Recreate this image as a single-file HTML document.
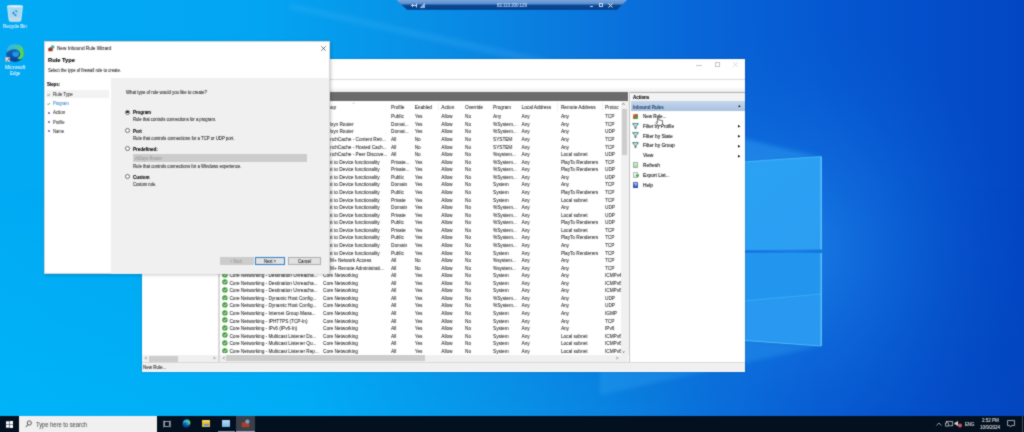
<!DOCTYPE html>
<html><head><meta charset="utf-8">
<style>
*{box-sizing:border-box;margin:0;padding:0}
html,body{width:1024px;height:432px;overflow:hidden;background:#0a70dc;font-family:"Liberation Sans",sans-serif;position:relative}
.a{position:absolute}
.t{position:absolute;white-space:nowrap;color:#222;transform-origin:0 50%;text-shadow:0.3px 0 0 color-mix(in srgb,currentColor 30%,transparent)}
.chk{position:absolute;width:5.6px;height:5.6px;border-radius:50%;background:radial-gradient(circle at 40% 35%,#7cc86a,#2e8a2e 70%);}
#wrap{position:absolute;left:0;top:0;width:1024px;height:432px;filter:url(#gb)}
</style></head><body><svg width="0" height="0" style="position:absolute"><filter id="gb" x="0" y="0" width="100%" height="100%" color-interpolation-filters="sRGB"><feConvolveMatrix order="3" kernelMatrix="1 2 1 2 12 2 1 2 1" divisor="24" edgeMode="duplicate"/></filter></svg><div id="wrap">
<svg class="a" style="left:0;top:0" width="1024" height="432" viewBox="0 0 1024 432">
<defs>
<linearGradient id="bgt" x1="0" y1="0" x2="1024" y2="0" gradientUnits="userSpaceOnUse">
<stop offset="0" stop-color="#02aaf4"/><stop offset="0.25" stop-color="#03a5f2"/><stop offset="0.4" stop-color="#0892e7"/>
<stop offset="0.55" stop-color="#0a7ade"/><stop offset="0.68" stop-color="#0866d8"/><stop offset="0.82" stop-color="#0556d0"/><stop offset="1" stop-color="#0346c4"/></linearGradient>
<linearGradient id="bgb" x1="0" y1="0" x2="1024" y2="0" gradientUnits="userSpaceOnUse">
<stop offset="0" stop-color="#00b4f8"/><stop offset="0.3" stop-color="#01acf5"/><stop offset="0.48" stop-color="#0894e8"/>
<stop offset="0.64" stop-color="#0a7cdd"/><stop offset="0.72" stop-color="#086ad8"/><stop offset="0.8" stop-color="#0658d0"/><stop offset="0.9" stop-color="#044ec8"/><stop offset="1" stop-color="#0346bf"/></linearGradient>
<linearGradient id="vmix" x1="0" y1="0" x2="0" y2="416" gradientUnits="userSpaceOnUse">
<stop offset="0" stop-color="#fff" stop-opacity="0"/><stop offset="0.45" stop-color="#fff" stop-opacity="0"/><stop offset="1" stop-color="#fff" stop-opacity="1"/></linearGradient>
<mask id="m1"><rect width="1024" height="432" fill="url(#vmix)"/></mask>
<radialGradient id="glow" cx="790" cy="250" r="230" gradientUnits="userSpaceOnUse">
<stop offset="0" stop-color="#2a96f2" stop-opacity="0.6"/><stop offset="0.5" stop-color="#1a7ee6" stop-opacity="0.3"/><stop offset="1" stop-color="#0a60d0" stop-opacity="0"/></radialGradient>
<linearGradient id="p1" x1="745" y1="157" x2="821" y2="250" gradientUnits="userSpaceOnUse">
<stop offset="0" stop-color="#2aa2f4"/><stop offset="1" stop-color="#2c9ef2"/></linearGradient>
<filter id="bl" x="-20%" y="-20%" width="140%" height="140%"><feGaussianBlur stdDeviation="2"/></filter>
<filter id="bl6" x="-20%" y="-20%" width="140%" height="140%"><feGaussianBlur stdDeviation="6"/></filter>
</defs>
<rect width="1024" height="432" fill="url(#bgt)"/>
<rect width="1024" height="432" fill="url(#bgb)" mask="url(#m1)"/>
<rect width="1024" height="432" fill="url(#glow)"/>
<polygon points="600,105 821,157 600,176" fill="#35a8f5" opacity="0.4" filter="url(#bl)"/>
<polygon points="600,330 821,346 600,395" fill="#35a8f5" opacity="0.3" filter="url(#bl)"/>
<polygon points="290,3 580,66 580,74 290,9" fill="#60c4ff" opacity="0.16" filter="url(#bl)"/>
<polygon points="600,172 821,156.5 821,249.5 600,251" fill="url(#p1)"/>
<polygon points="600,253 821,253 821,346 600,330" fill="#2296ee"/>
<polygon points="600,314 821,294 821,346 600,330" fill="#2898f0"/>
<line x1="600" y1="314" x2="821" y2="294" stroke="#48b8f8" stroke-width="0.6"/>
<line x1="821.2" y1="156.5" x2="821.2" y2="249.5" stroke="#78d8ff" stroke-width="1.1"/>
<line x1="821.2" y1="253" x2="821.2" y2="346" stroke="#78d8ff" stroke-width="1.1"/>
<line x1="600" y1="172" x2="821" y2="156.5" stroke="#58c4fa" stroke-width="0.7"/>
<line x1="600" y1="330" x2="821" y2="346" stroke="#58c4fa" stroke-width="0.8"/>
</svg>
<svg class="a" style="left:390px;top:0" width="240" height="12" viewBox="0 0 240 12">
<defs><linearGradient id="rdp" x1="0" y1="0" x2="0" y2="1">
<stop offset="0" stop-color="#79a6de"/><stop offset="0.42" stop-color="#5a8ccc"/><stop offset="0.5" stop-color="#0b4b98"/><stop offset="1" stop-color="#083c84"/></linearGradient></defs>
<polygon points="6.5,0 237,0 227,9.8 17,9.8" fill="url(#rdp)"/>
</svg>
<div class="t" style="left:497.00px;top:4px;font-size:4.6px;line-height:4.6px;color:#cfe2ff;transform:scaleX(0.9452);">82.113.200.129</div>
<svg class="a" style="left:411px;top:2.5px" width="6" height="5" viewBox="0 0 6 5"><path d="M0.5,2.5 L5.5,2.5 M2,1 L0.5,2.5 L2,4 M5.5,0.5 L5.5,4.5" stroke="#e8eefa" stroke-width="0.9" fill="none"/></svg>
<div class="a" style="left:420px;top:2.5px;width:5px;height:5px;background:linear-gradient(135deg,transparent 50%,#9bb7de 50%)"></div>
<div class="a" style="left:590px;top:6px;width:3px;height:1px;background:#cdd9ee;"></div>
<div class="a" style="left:599px;top:3px;width:4px;height:4px;border:1px solid #cdd9ee"></div>
<svg class="a" style="left:608px;top:2.5px" width="5" height="5" viewBox="0 0 5 5"><path d="M0.5,0.5 L4.5,4.5 M4.5,0.5 L0.5,4.5" stroke="#eef2fa" stroke-width="1"/></svg>
<svg class="a" style="left:5px;top:3.5px" width="20" height="18" viewBox="0 0 20 18">
<path d="M2.5,2 L17.5,2 L15.8,16.5 Q15.6,17.3 14.8,17.3 L5.2,17.3 Q4.4,17.3 4.2,16.5 Z" fill="#d8e8f4" fill-opacity="0.75" stroke="#f2f8fc" stroke-width="0.7"/>
<ellipse cx="10" cy="2.2" rx="7.6" ry="1.2" fill="#eef6fb" fill-opacity="0.8"/>
<path d="M4.5,13.5 L15.5,13.5 L15.1,16.5 L4.9,16.5Z" fill="#e8d8d8" opacity="0.5"/>
<path d="M7.2,9.8 L8.6,7.2 L10,9.8 Z M9.6,6.6 L11.8,6.6 L12.6,8.8 Z M8.2,10.6 L11.8,10.6 L10.8,12.2 Z" fill="#2a6cc0"/>
</svg>
<div class="t" style="left:3.20px;top:25px;font-size:4.8px;line-height:4.8px;color:#eef7ff;transform:scaleX(0.9352);">Recycle Bin</div>
<svg class="a" style="left:4.6px;top:42.7px" width="20" height="20" viewBox="0 0 22 22">
<defs><linearGradient id="edg" x1="0" y1="0" x2="0.3" y2="1"><stop offset="0" stop-color="#1a78d0"/><stop offset="1" stop-color="#0c3f96"/></linearGradient>
<linearGradient id="edg2" x1="0" y1="0" x2="1" y2="0.4"><stop offset="0" stop-color="#30b4ea"/><stop offset="0.55" stop-color="#38c0c8"/><stop offset="1" stop-color="#5cd84a"/></linearGradient></defs>
<circle cx="11" cy="11" r="9.8" fill="url(#edg)"/>
<path d="M1.2,11.5 Q1.5,1.2 11,1.2 Q20.8,1.4 20.8,11 Q20.8,16 17.5,17.5 Q14.5,18.5 13.5,16.5 Q17.5,15 16.5,11 Q15,6.5 9.5,6.8 Q4,7.5 1.2,11.5Z" fill="url(#edg2)"/>
<ellipse cx="11.8" cy="12.2" rx="3.6" ry="3.3" fill="#1c9ae6"/>
<path d="M1.4,12.5 Q3,8.5 8,8.2 Q12,8.4 12.5,11" stroke="#0e5cb8" stroke-width="1.2" fill="none" opacity="0.6"/>
</svg>
<div class="a" style="left:5.2px;top:57.2px;width:5px;height:5px;background:#f6f6f6;border:0.4px solid #9ab"></div>
<svg class="a" style="left:5.8px;top:57.8px" width="4" height="4" viewBox="0 0 4 4"><path d="M0.8,3.4 Q1,1.4 3,1.2 M2.1,0.5 L3.1,1.2 L2.3,2.1" stroke="#1a2a4a" stroke-width="0.6" fill="none"/></svg>
<div class="t" style="left:4.60px;top:66px;font-size:4.8px;line-height:4.8px;color:#eef7ff;transform:scaleX(1.0478);">Microsoft</div>
<div class="t" style="left:9.70px;top:72px;font-size:4.8px;line-height:4.8px;color:#eef7ff;transform:scaleX(0.9188);">Edge</div>
<div class="a" style="left:142px;top:58.6px;width:602.8px;height:313.2px;background:#ffffff;box-shadow:0 0 2px rgba(0,0,0,.25)"></div>
<div class="a" style="left:696px;top:64.8px;width:6px;height:0.6px;background:#c4c4c4;"></div>
<div class="a" style="left:715px;top:62.3px;width:4.6px;height:4.6px;border:0.6px solid #c4c4c4"></div>
<svg class="a" style="left:732.9px;top:62.3px" width="5" height="5" viewBox="0 0 5 5"><path d="M0.3,0.3 L4.7,4.7 M4.7,0.3 L0.3,4.7" stroke="#c4c4c4" stroke-width="0.6"/></svg>
<div class="a" style="left:142px;top:79px;width:602.8px;height:0.8px;background:#dcdcdc;"></div>
<div class="a" style="left:142px;top:87px;width:602.8px;height:5px;background:linear-gradient(#ffffff,#ececec);"></div>
<div class="a" style="left:218px;top:91.8px;width:2.4px;height:270.5px;background:#d9d9d9;"></div>
<div class="a" style="left:142px;top:355.3px;width:76px;height:6.9px;background:#f0f0f0;"></div>
<div class="a" style="left:149.3px;top:355.8px;width:28.5px;height:6px;background:#cdcdcd;"></div>
<div class="t" style="left:144.50px;top:357px;font-size:4.5px;line-height:4.5px;color:#777;">&lt;</div>
<div class="t" style="left:213.00px;top:357px;font-size:4.5px;line-height:4.5px;color:#777;">&gt;</div>
<div class="a" style="left:220.4px;top:92px;width:407.3px;height:8.7px;background:#6b6b6b;"></div>
<div class="a" style="left:220.4px;top:355.3px;width:408px;height:6.9px;background:#f0f0f0;"></div>
<div class="a" style="left:226px;top:355.2px;width:199px;height:5.6px;background:#cdcdcd;"></div>
<div class="t" style="left:222.50px;top:357px;font-size:4.5px;line-height:4.5px;color:#777;">&lt;</div>
<div class="t" style="left:615.80px;top:357px;font-size:4.5px;line-height:4.5px;color:#777;">&gt;</div>
<div class="t" style="left:229.40px;top:106px;font-size:4.7px;line-height:4.7px;color:#2a2a2a;">Name</div>
<div class="t" style="left:323.00px;top:106px;font-size:4.7px;line-height:4.7px;color:#2a2a2a;">Group</div>
<div class="t" style="left:391.00px;top:106px;font-size:4.7px;line-height:4.7px;color:#2a2a2a;">Profile</div>
<div class="t" style="left:414.70px;top:106px;font-size:4.7px;line-height:4.7px;color:#2a2a2a;">Enabled</div>
<div class="t" style="left:441.30px;top:106px;font-size:4.7px;line-height:4.7px;color:#2a2a2a;">Action</div>
<div class="t" style="left:465.00px;top:106px;font-size:4.7px;line-height:4.7px;color:#2a2a2a;">Override</div>
<div class="t" style="left:493.00px;top:106px;font-size:4.7px;line-height:4.7px;color:#2a2a2a;">Program</div>
<div class="t" style="left:521.60px;top:106px;font-size:4.7px;line-height:4.7px;color:#2a2a2a;">Local Address</div>
<div class="t" style="left:560.90px;top:106px;font-size:4.7px;line-height:4.7px;color:#2a2a2a;">Remote Address</div>
<div class="t" style="left:605.00px;top:106px;font-size:4.7px;line-height:4.7px;color:#2a2a2a;">Protoc</div>
<div class="t" style="left:352.60px;top:102px;font-size:4.2px;line-height:4.2px;color:#aaa;">^</div>
<div class="a" style="left:438px;top:101.5px;width:0.6px;height:9px;background:#f0f0f0;"></div>
<div class="a" style="left:557px;top:101.5px;width:0.6px;height:9px;background:#f0f0f0;"></div>
<div class="a" style="left:601.5px;top:101.5px;width:0.6px;height:9px;background:#f0f0f0;"></div>
<div class="t" style="left:391.00px;top:115px;font-size:4.7px;line-height:4.7px;color:#2a2a2a;">Public</div>
<div class="t" style="left:414.70px;top:115px;font-size:4.7px;line-height:4.7px;color:#2a2a2a;">Yes</div>
<div class="t" style="left:441.30px;top:115px;font-size:4.7px;line-height:4.7px;color:#2a2a2a;">Allow</div>
<div class="t" style="left:465.00px;top:115px;font-size:4.7px;line-height:4.7px;color:#2a2a2a;">No</div>
<div class="t" style="left:493.00px;top:115px;font-size:4.7px;line-height:4.7px;color:#2a2a2a;">Any</div>
<div class="t" style="left:521.60px;top:115px;font-size:4.7px;line-height:4.7px;color:#2a2a2a;">Any</div>
<div class="t" style="left:560.90px;top:115px;font-size:4.7px;line-height:4.7px;color:#2a2a2a;">Any</div>
<div class="t" style="left:605.00px;top:115px;font-size:4.7px;line-height:4.7px;color:#2a2a2a;">TCP</div>
<div class="t" style="left:323.00px;top:123px;font-size:4.7px;line-height:4.7px;color:#2a2a2a;">AllJoyn Router</div>
<div class="t" style="left:391.00px;top:123px;font-size:4.7px;line-height:4.7px;color:#2a2a2a;">Domai...</div>
<div class="t" style="left:414.70px;top:123px;font-size:4.7px;line-height:4.7px;color:#2a2a2a;">Yes</div>
<div class="t" style="left:441.30px;top:123px;font-size:4.7px;line-height:4.7px;color:#2a2a2a;">Allow</div>
<div class="t" style="left:465.00px;top:123px;font-size:4.7px;line-height:4.7px;color:#2a2a2a;">No</div>
<div class="t" style="left:493.00px;top:123px;font-size:4.7px;line-height:4.7px;color:#2a2a2a;">%System...</div>
<div class="t" style="left:521.60px;top:123px;font-size:4.7px;line-height:4.7px;color:#2a2a2a;">Any</div>
<div class="t" style="left:560.90px;top:123px;font-size:4.7px;line-height:4.7px;color:#2a2a2a;">Any</div>
<div class="t" style="left:605.00px;top:123px;font-size:4.7px;line-height:4.7px;color:#2a2a2a;">TCP</div>
<div class="t" style="left:323.00px;top:130px;font-size:4.7px;line-height:4.7px;color:#2a2a2a;">AllJoyn Router</div>
<div class="t" style="left:391.00px;top:130px;font-size:4.7px;line-height:4.7px;color:#2a2a2a;">Domai...</div>
<div class="t" style="left:414.70px;top:130px;font-size:4.7px;line-height:4.7px;color:#2a2a2a;">Yes</div>
<div class="t" style="left:441.30px;top:130px;font-size:4.7px;line-height:4.7px;color:#2a2a2a;">Allow</div>
<div class="t" style="left:465.00px;top:130px;font-size:4.7px;line-height:4.7px;color:#2a2a2a;">No</div>
<div class="t" style="left:493.00px;top:130px;font-size:4.7px;line-height:4.7px;color:#2a2a2a;">%System...</div>
<div class="t" style="left:521.60px;top:130px;font-size:4.7px;line-height:4.7px;color:#2a2a2a;">Any</div>
<div class="t" style="left:560.90px;top:130px;font-size:4.7px;line-height:4.7px;color:#2a2a2a;">Any</div>
<div class="t" style="left:605.00px;top:130px;font-size:4.7px;line-height:4.7px;color:#2a2a2a;">UDP</div>
<div class="t" style="left:323.00px;top:138px;font-size:4.7px;line-height:4.7px;color:#2a2a2a;">BranchCache - Content Retr...</div>
<div class="t" style="left:391.00px;top:138px;font-size:4.7px;line-height:4.7px;color:#2a2a2a;">All</div>
<div class="t" style="left:414.70px;top:138px;font-size:4.7px;line-height:4.7px;color:#2a2a2a;">No</div>
<div class="t" style="left:441.30px;top:138px;font-size:4.7px;line-height:4.7px;color:#2a2a2a;">Allow</div>
<div class="t" style="left:465.00px;top:138px;font-size:4.7px;line-height:4.7px;color:#2a2a2a;">No</div>
<div class="t" style="left:493.00px;top:138px;font-size:4.7px;line-height:4.7px;color:#2a2a2a;">SYSTEM</div>
<div class="t" style="left:521.60px;top:138px;font-size:4.7px;line-height:4.7px;color:#2a2a2a;">Any</div>
<div class="t" style="left:560.90px;top:138px;font-size:4.7px;line-height:4.7px;color:#2a2a2a;">Any</div>
<div class="t" style="left:605.00px;top:138px;font-size:4.7px;line-height:4.7px;color:#2a2a2a;">TCP</div>
<div class="t" style="left:323.00px;top:146px;font-size:4.7px;line-height:4.7px;color:#2a2a2a;">BranchCache - Hosted Cach...</div>
<div class="t" style="left:391.00px;top:146px;font-size:4.7px;line-height:4.7px;color:#2a2a2a;">All</div>
<div class="t" style="left:414.70px;top:146px;font-size:4.7px;line-height:4.7px;color:#2a2a2a;">No</div>
<div class="t" style="left:441.30px;top:146px;font-size:4.7px;line-height:4.7px;color:#2a2a2a;">Allow</div>
<div class="t" style="left:465.00px;top:146px;font-size:4.7px;line-height:4.7px;color:#2a2a2a;">No</div>
<div class="t" style="left:493.00px;top:146px;font-size:4.7px;line-height:4.7px;color:#2a2a2a;">SYSTEM</div>
<div class="t" style="left:521.60px;top:146px;font-size:4.7px;line-height:4.7px;color:#2a2a2a;">Any</div>
<div class="t" style="left:560.90px;top:146px;font-size:4.7px;line-height:4.7px;color:#2a2a2a;">Any</div>
<div class="t" style="left:605.00px;top:146px;font-size:4.7px;line-height:4.7px;color:#2a2a2a;">TCP</div>
<div class="t" style="left:323.00px;top:153px;font-size:4.7px;line-height:4.7px;color:#2a2a2a;">BranchCache - Peer Discove...</div>
<div class="t" style="left:391.00px;top:153px;font-size:4.7px;line-height:4.7px;color:#2a2a2a;">All</div>
<div class="t" style="left:414.70px;top:153px;font-size:4.7px;line-height:4.7px;color:#2a2a2a;">No</div>
<div class="t" style="left:441.30px;top:153px;font-size:4.7px;line-height:4.7px;color:#2a2a2a;">Allow</div>
<div class="t" style="left:465.00px;top:153px;font-size:4.7px;line-height:4.7px;color:#2a2a2a;">No</div>
<div class="t" style="left:493.00px;top:153px;font-size:4.7px;line-height:4.7px;color:#2a2a2a;">%system...</div>
<div class="t" style="left:521.60px;top:153px;font-size:4.7px;line-height:4.7px;color:#2a2a2a;">Any</div>
<div class="t" style="left:560.90px;top:153px;font-size:4.7px;line-height:4.7px;color:#2a2a2a;">Local subnet</div>
<div class="t" style="left:605.00px;top:153px;font-size:4.7px;line-height:4.7px;color:#2a2a2a;">UDP</div>
<div class="t" style="left:323.00px;top:161px;font-size:4.7px;line-height:4.7px;color:#2a2a2a;">Cast to Device functionality</div>
<div class="t" style="left:391.00px;top:161px;font-size:4.7px;line-height:4.7px;color:#2a2a2a;">Private...</div>
<div class="t" style="left:414.70px;top:161px;font-size:4.7px;line-height:4.7px;color:#2a2a2a;">Yes</div>
<div class="t" style="left:441.30px;top:161px;font-size:4.7px;line-height:4.7px;color:#2a2a2a;">Allow</div>
<div class="t" style="left:465.00px;top:161px;font-size:4.7px;line-height:4.7px;color:#2a2a2a;">No</div>
<div class="t" style="left:493.00px;top:161px;font-size:4.7px;line-height:4.7px;color:#2a2a2a;">%System...</div>
<div class="t" style="left:521.60px;top:161px;font-size:4.7px;line-height:4.7px;color:#2a2a2a;">Any</div>
<div class="t" style="left:560.90px;top:161px;font-size:4.7px;line-height:4.7px;color:#2a2a2a;">PlayTo Renderers</div>
<div class="t" style="left:605.00px;top:161px;font-size:4.7px;line-height:4.7px;color:#2a2a2a;">TCP</div>
<div class="t" style="left:323.00px;top:168px;font-size:4.7px;line-height:4.7px;color:#2a2a2a;">Cast to Device functionality</div>
<div class="t" style="left:391.00px;top:168px;font-size:4.7px;line-height:4.7px;color:#2a2a2a;">Private...</div>
<div class="t" style="left:414.70px;top:168px;font-size:4.7px;line-height:4.7px;color:#2a2a2a;">Yes</div>
<div class="t" style="left:441.30px;top:168px;font-size:4.7px;line-height:4.7px;color:#2a2a2a;">Allow</div>
<div class="t" style="left:465.00px;top:168px;font-size:4.7px;line-height:4.7px;color:#2a2a2a;">No</div>
<div class="t" style="left:493.00px;top:168px;font-size:4.7px;line-height:4.7px;color:#2a2a2a;">%System...</div>
<div class="t" style="left:521.60px;top:168px;font-size:4.7px;line-height:4.7px;color:#2a2a2a;">Any</div>
<div class="t" style="left:560.90px;top:168px;font-size:4.7px;line-height:4.7px;color:#2a2a2a;">PlayTo Renderers</div>
<div class="t" style="left:605.00px;top:168px;font-size:4.7px;line-height:4.7px;color:#2a2a2a;">UDP</div>
<div class="t" style="left:323.00px;top:176px;font-size:4.7px;line-height:4.7px;color:#2a2a2a;">Cast to Device functionality</div>
<div class="t" style="left:391.00px;top:176px;font-size:4.7px;line-height:4.7px;color:#2a2a2a;">Public</div>
<div class="t" style="left:414.70px;top:176px;font-size:4.7px;line-height:4.7px;color:#2a2a2a;">Yes</div>
<div class="t" style="left:441.30px;top:176px;font-size:4.7px;line-height:4.7px;color:#2a2a2a;">Allow</div>
<div class="t" style="left:465.00px;top:176px;font-size:4.7px;line-height:4.7px;color:#2a2a2a;">No</div>
<div class="t" style="left:493.00px;top:176px;font-size:4.7px;line-height:4.7px;color:#2a2a2a;">%System...</div>
<div class="t" style="left:521.60px;top:176px;font-size:4.7px;line-height:4.7px;color:#2a2a2a;">Any</div>
<div class="t" style="left:560.90px;top:176px;font-size:4.7px;line-height:4.7px;color:#2a2a2a;">Any</div>
<div class="t" style="left:605.00px;top:176px;font-size:4.7px;line-height:4.7px;color:#2a2a2a;">UDP</div>
<div class="t" style="left:323.00px;top:183px;font-size:4.7px;line-height:4.7px;color:#2a2a2a;">Cast to Device functionality</div>
<div class="t" style="left:391.00px;top:183px;font-size:4.7px;line-height:4.7px;color:#2a2a2a;">Domain</div>
<div class="t" style="left:414.70px;top:183px;font-size:4.7px;line-height:4.7px;color:#2a2a2a;">Yes</div>
<div class="t" style="left:441.30px;top:183px;font-size:4.7px;line-height:4.7px;color:#2a2a2a;">Allow</div>
<div class="t" style="left:465.00px;top:183px;font-size:4.7px;line-height:4.7px;color:#2a2a2a;">No</div>
<div class="t" style="left:493.00px;top:183px;font-size:4.7px;line-height:4.7px;color:#2a2a2a;">System</div>
<div class="t" style="left:521.60px;top:183px;font-size:4.7px;line-height:4.7px;color:#2a2a2a;">Any</div>
<div class="t" style="left:560.90px;top:183px;font-size:4.7px;line-height:4.7px;color:#2a2a2a;">Any</div>
<div class="t" style="left:605.00px;top:183px;font-size:4.7px;line-height:4.7px;color:#2a2a2a;">TCP</div>
<div class="t" style="left:323.00px;top:191px;font-size:4.7px;line-height:4.7px;color:#2a2a2a;">Cast to Device functionality</div>
<div class="t" style="left:391.00px;top:191px;font-size:4.7px;line-height:4.7px;color:#2a2a2a;">Public</div>
<div class="t" style="left:414.70px;top:191px;font-size:4.7px;line-height:4.7px;color:#2a2a2a;">Yes</div>
<div class="t" style="left:441.30px;top:191px;font-size:4.7px;line-height:4.7px;color:#2a2a2a;">Allow</div>
<div class="t" style="left:465.00px;top:191px;font-size:4.7px;line-height:4.7px;color:#2a2a2a;">No</div>
<div class="t" style="left:493.00px;top:191px;font-size:4.7px;line-height:4.7px;color:#2a2a2a;">System</div>
<div class="t" style="left:521.60px;top:191px;font-size:4.7px;line-height:4.7px;color:#2a2a2a;">Any</div>
<div class="t" style="left:560.90px;top:191px;font-size:4.7px;line-height:4.7px;color:#2a2a2a;">PlayTo Renderers</div>
<div class="t" style="left:605.00px;top:191px;font-size:4.7px;line-height:4.7px;color:#2a2a2a;">TCP</div>
<div class="t" style="left:323.00px;top:199px;font-size:4.7px;line-height:4.7px;color:#2a2a2a;">Cast to Device functionality</div>
<div class="t" style="left:391.00px;top:199px;font-size:4.7px;line-height:4.7px;color:#2a2a2a;">Private</div>
<div class="t" style="left:414.70px;top:199px;font-size:4.7px;line-height:4.7px;color:#2a2a2a;">Yes</div>
<div class="t" style="left:441.30px;top:199px;font-size:4.7px;line-height:4.7px;color:#2a2a2a;">Allow</div>
<div class="t" style="left:465.00px;top:199px;font-size:4.7px;line-height:4.7px;color:#2a2a2a;">No</div>
<div class="t" style="left:493.00px;top:199px;font-size:4.7px;line-height:4.7px;color:#2a2a2a;">System</div>
<div class="t" style="left:521.60px;top:199px;font-size:4.7px;line-height:4.7px;color:#2a2a2a;">Any</div>
<div class="t" style="left:560.90px;top:199px;font-size:4.7px;line-height:4.7px;color:#2a2a2a;">Local subnet</div>
<div class="t" style="left:605.00px;top:199px;font-size:4.7px;line-height:4.7px;color:#2a2a2a;">TCP</div>
<div class="t" style="left:323.00px;top:206px;font-size:4.7px;line-height:4.7px;color:#2a2a2a;">Cast to Device functionality</div>
<div class="t" style="left:391.00px;top:206px;font-size:4.7px;line-height:4.7px;color:#2a2a2a;">Domain</div>
<div class="t" style="left:414.70px;top:206px;font-size:4.7px;line-height:4.7px;color:#2a2a2a;">Yes</div>
<div class="t" style="left:441.30px;top:206px;font-size:4.7px;line-height:4.7px;color:#2a2a2a;">Allow</div>
<div class="t" style="left:465.00px;top:206px;font-size:4.7px;line-height:4.7px;color:#2a2a2a;">No</div>
<div class="t" style="left:493.00px;top:206px;font-size:4.7px;line-height:4.7px;color:#2a2a2a;">%System...</div>
<div class="t" style="left:521.60px;top:206px;font-size:4.7px;line-height:4.7px;color:#2a2a2a;">Any</div>
<div class="t" style="left:560.90px;top:206px;font-size:4.7px;line-height:4.7px;color:#2a2a2a;">Any</div>
<div class="t" style="left:605.00px;top:206px;font-size:4.7px;line-height:4.7px;color:#2a2a2a;">UDP</div>
<div class="t" style="left:323.00px;top:214px;font-size:4.7px;line-height:4.7px;color:#2a2a2a;">Cast to Device functionality</div>
<div class="t" style="left:391.00px;top:214px;font-size:4.7px;line-height:4.7px;color:#2a2a2a;">Private</div>
<div class="t" style="left:414.70px;top:214px;font-size:4.7px;line-height:4.7px;color:#2a2a2a;">Yes</div>
<div class="t" style="left:441.30px;top:214px;font-size:4.7px;line-height:4.7px;color:#2a2a2a;">Allow</div>
<div class="t" style="left:465.00px;top:214px;font-size:4.7px;line-height:4.7px;color:#2a2a2a;">No</div>
<div class="t" style="left:493.00px;top:214px;font-size:4.7px;line-height:4.7px;color:#2a2a2a;">%System...</div>
<div class="t" style="left:521.60px;top:214px;font-size:4.7px;line-height:4.7px;color:#2a2a2a;">Any</div>
<div class="t" style="left:560.90px;top:214px;font-size:4.7px;line-height:4.7px;color:#2a2a2a;">Local subnet</div>
<div class="t" style="left:605.00px;top:214px;font-size:4.7px;line-height:4.7px;color:#2a2a2a;">UDP</div>
<div class="t" style="left:323.00px;top:221px;font-size:4.7px;line-height:4.7px;color:#2a2a2a;">Cast to Device functionality</div>
<div class="t" style="left:391.00px;top:221px;font-size:4.7px;line-height:4.7px;color:#2a2a2a;">Public</div>
<div class="t" style="left:414.70px;top:221px;font-size:4.7px;line-height:4.7px;color:#2a2a2a;">Yes</div>
<div class="t" style="left:441.30px;top:221px;font-size:4.7px;line-height:4.7px;color:#2a2a2a;">Allow</div>
<div class="t" style="left:465.00px;top:221px;font-size:4.7px;line-height:4.7px;color:#2a2a2a;">No</div>
<div class="t" style="left:493.00px;top:221px;font-size:4.7px;line-height:4.7px;color:#2a2a2a;">%System...</div>
<div class="t" style="left:521.60px;top:221px;font-size:4.7px;line-height:4.7px;color:#2a2a2a;">Any</div>
<div class="t" style="left:560.90px;top:221px;font-size:4.7px;line-height:4.7px;color:#2a2a2a;">PlayTo Renderers</div>
<div class="t" style="left:605.00px;top:221px;font-size:4.7px;line-height:4.7px;color:#2a2a2a;">UDP</div>
<div class="t" style="left:323.00px;top:229px;font-size:4.7px;line-height:4.7px;color:#2a2a2a;">Cast to Device functionality</div>
<div class="t" style="left:391.00px;top:229px;font-size:4.7px;line-height:4.7px;color:#2a2a2a;">Private</div>
<div class="t" style="left:414.70px;top:229px;font-size:4.7px;line-height:4.7px;color:#2a2a2a;">Yes</div>
<div class="t" style="left:441.30px;top:229px;font-size:4.7px;line-height:4.7px;color:#2a2a2a;">Allow</div>
<div class="t" style="left:465.00px;top:229px;font-size:4.7px;line-height:4.7px;color:#2a2a2a;">No</div>
<div class="t" style="left:493.00px;top:229px;font-size:4.7px;line-height:4.7px;color:#2a2a2a;">%System...</div>
<div class="t" style="left:521.60px;top:229px;font-size:4.7px;line-height:4.7px;color:#2a2a2a;">Any</div>
<div class="t" style="left:560.90px;top:229px;font-size:4.7px;line-height:4.7px;color:#2a2a2a;">Local subnet</div>
<div class="t" style="left:605.00px;top:229px;font-size:4.7px;line-height:4.7px;color:#2a2a2a;">TCP</div>
<div class="t" style="left:323.00px;top:236px;font-size:4.7px;line-height:4.7px;color:#2a2a2a;">Cast to Device functionality</div>
<div class="t" style="left:391.00px;top:236px;font-size:4.7px;line-height:4.7px;color:#2a2a2a;">Public</div>
<div class="t" style="left:414.70px;top:236px;font-size:4.7px;line-height:4.7px;color:#2a2a2a;">Yes</div>
<div class="t" style="left:441.30px;top:236px;font-size:4.7px;line-height:4.7px;color:#2a2a2a;">Allow</div>
<div class="t" style="left:465.00px;top:236px;font-size:4.7px;line-height:4.7px;color:#2a2a2a;">No</div>
<div class="t" style="left:493.00px;top:236px;font-size:4.7px;line-height:4.7px;color:#2a2a2a;">%System...</div>
<div class="t" style="left:521.60px;top:236px;font-size:4.7px;line-height:4.7px;color:#2a2a2a;">Any</div>
<div class="t" style="left:560.90px;top:236px;font-size:4.7px;line-height:4.7px;color:#2a2a2a;">PlayTo Renderers</div>
<div class="t" style="left:605.00px;top:236px;font-size:4.7px;line-height:4.7px;color:#2a2a2a;">TCP</div>
<div class="t" style="left:323.00px;top:244px;font-size:4.7px;line-height:4.7px;color:#2a2a2a;">Cast to Device functionality</div>
<div class="t" style="left:391.00px;top:244px;font-size:4.7px;line-height:4.7px;color:#2a2a2a;">Domain</div>
<div class="t" style="left:414.70px;top:244px;font-size:4.7px;line-height:4.7px;color:#2a2a2a;">Yes</div>
<div class="t" style="left:441.30px;top:244px;font-size:4.7px;line-height:4.7px;color:#2a2a2a;">Allow</div>
<div class="t" style="left:465.00px;top:244px;font-size:4.7px;line-height:4.7px;color:#2a2a2a;">No</div>
<div class="t" style="left:493.00px;top:244px;font-size:4.7px;line-height:4.7px;color:#2a2a2a;">%System...</div>
<div class="t" style="left:521.60px;top:244px;font-size:4.7px;line-height:4.7px;color:#2a2a2a;">Any</div>
<div class="t" style="left:560.90px;top:244px;font-size:4.7px;line-height:4.7px;color:#2a2a2a;">Any</div>
<div class="t" style="left:605.00px;top:244px;font-size:4.7px;line-height:4.7px;color:#2a2a2a;">TCP</div>
<div class="t" style="left:323.00px;top:252px;font-size:4.7px;line-height:4.7px;color:#2a2a2a;">Cast to Device functionality</div>
<div class="t" style="left:391.00px;top:252px;font-size:4.7px;line-height:4.7px;color:#2a2a2a;">Public</div>
<div class="t" style="left:414.70px;top:252px;font-size:4.7px;line-height:4.7px;color:#2a2a2a;">Yes</div>
<div class="t" style="left:441.30px;top:252px;font-size:4.7px;line-height:4.7px;color:#2a2a2a;">Allow</div>
<div class="t" style="left:465.00px;top:252px;font-size:4.7px;line-height:4.7px;color:#2a2a2a;">No</div>
<div class="t" style="left:493.00px;top:252px;font-size:4.7px;line-height:4.7px;color:#2a2a2a;">System</div>
<div class="t" style="left:521.60px;top:252px;font-size:4.7px;line-height:4.7px;color:#2a2a2a;">Any</div>
<div class="t" style="left:560.90px;top:252px;font-size:4.7px;line-height:4.7px;color:#2a2a2a;">PlayTo Renderers</div>
<div class="t" style="left:605.00px;top:252px;font-size:4.7px;line-height:4.7px;color:#2a2a2a;">TCP</div>
<div class="t" style="left:323.00px;top:259px;font-size:4.7px;line-height:4.7px;color:#2a2a2a;">COM+ Network Access</div>
<div class="t" style="left:391.00px;top:259px;font-size:4.7px;line-height:4.7px;color:#2a2a2a;">All</div>
<div class="t" style="left:414.70px;top:259px;font-size:4.7px;line-height:4.7px;color:#2a2a2a;">No</div>
<div class="t" style="left:441.30px;top:259px;font-size:4.7px;line-height:4.7px;color:#2a2a2a;">Allow</div>
<div class="t" style="left:465.00px;top:259px;font-size:4.7px;line-height:4.7px;color:#2a2a2a;">No</div>
<div class="t" style="left:493.00px;top:259px;font-size:4.7px;line-height:4.7px;color:#2a2a2a;">%system...</div>
<div class="t" style="left:521.60px;top:259px;font-size:4.7px;line-height:4.7px;color:#2a2a2a;">Any</div>
<div class="t" style="left:560.90px;top:259px;font-size:4.7px;line-height:4.7px;color:#2a2a2a;">Any</div>
<div class="t" style="left:605.00px;top:259px;font-size:4.7px;line-height:4.7px;color:#2a2a2a;">TCP</div>
<div class="t" style="left:323.00px;top:267px;font-size:4.7px;line-height:4.7px;color:#2a2a2a;">COM+ Remote Administrati...</div>
<div class="t" style="left:391.00px;top:267px;font-size:4.7px;line-height:4.7px;color:#2a2a2a;">All</div>
<div class="t" style="left:414.70px;top:267px;font-size:4.7px;line-height:4.7px;color:#2a2a2a;">No</div>
<div class="t" style="left:441.30px;top:267px;font-size:4.7px;line-height:4.7px;color:#2a2a2a;">Allow</div>
<div class="t" style="left:465.00px;top:267px;font-size:4.7px;line-height:4.7px;color:#2a2a2a;">No</div>
<div class="t" style="left:493.00px;top:267px;font-size:4.7px;line-height:4.7px;color:#2a2a2a;">%system...</div>
<div class="t" style="left:521.60px;top:267px;font-size:4.7px;line-height:4.7px;color:#2a2a2a;">Any</div>
<div class="t" style="left:560.90px;top:267px;font-size:4.7px;line-height:4.7px;color:#2a2a2a;">Any</div>
<div class="t" style="left:605.00px;top:267px;font-size:4.7px;line-height:4.7px;color:#2a2a2a;">TCP</div>
<svg class="a" style="left:222.2px;top:271.87px" width="5.8" height="5.8" viewBox="0 0 6 6"><circle cx="3" cy="3" r="2.8" fill="#3f9a3a"/><path d="M1.6,3.1 L2.7,4.1 L4.5,1.9" stroke="#fff" stroke-width="0.9" fill="none"/></svg>
<div class="t" style="left:229.40px;top:274px;font-size:4.7px;line-height:4.7px;color:#2a2a2a;">Core Networking - Destination Unreacha...</div>
<div class="t" style="left:323.00px;top:274px;font-size:4.7px;line-height:4.7px;color:#2a2a2a;">Core Networking</div>
<div class="t" style="left:391.00px;top:274px;font-size:4.7px;line-height:4.7px;color:#2a2a2a;">All</div>
<div class="t" style="left:414.70px;top:274px;font-size:4.7px;line-height:4.7px;color:#2a2a2a;">Yes</div>
<div class="t" style="left:441.30px;top:274px;font-size:4.7px;line-height:4.7px;color:#2a2a2a;">Allow</div>
<div class="t" style="left:465.00px;top:274px;font-size:4.7px;line-height:4.7px;color:#2a2a2a;">No</div>
<div class="t" style="left:493.00px;top:274px;font-size:4.7px;line-height:4.7px;color:#2a2a2a;">System</div>
<div class="t" style="left:521.60px;top:274px;font-size:4.7px;line-height:4.7px;color:#2a2a2a;">Any</div>
<div class="t" style="left:560.90px;top:274px;font-size:4.7px;line-height:4.7px;color:#2a2a2a;">Any</div>
<div class="t" style="left:605.00px;top:274px;font-size:4.7px;line-height:4.7px;color:#2a2a2a;">ICMPv4</div>
<svg class="a" style="left:222.2px;top:279.44px" width="5.8" height="5.8" viewBox="0 0 6 6"><circle cx="3" cy="3" r="2.8" fill="#3f9a3a"/><path d="M1.6,3.1 L2.7,4.1 L4.5,1.9" stroke="#fff" stroke-width="0.9" fill="none"/></svg>
<div class="t" style="left:229.40px;top:282px;font-size:4.7px;line-height:4.7px;color:#2a2a2a;">Core Networking - Destination Unreacha...</div>
<div class="t" style="left:323.00px;top:282px;font-size:4.7px;line-height:4.7px;color:#2a2a2a;">Core Networking</div>
<div class="t" style="left:391.00px;top:282px;font-size:4.7px;line-height:4.7px;color:#2a2a2a;">All</div>
<div class="t" style="left:414.70px;top:282px;font-size:4.7px;line-height:4.7px;color:#2a2a2a;">Yes</div>
<div class="t" style="left:441.30px;top:282px;font-size:4.7px;line-height:4.7px;color:#2a2a2a;">Allow</div>
<div class="t" style="left:465.00px;top:282px;font-size:4.7px;line-height:4.7px;color:#2a2a2a;">No</div>
<div class="t" style="left:493.00px;top:282px;font-size:4.7px;line-height:4.7px;color:#2a2a2a;">System</div>
<div class="t" style="left:521.60px;top:282px;font-size:4.7px;line-height:4.7px;color:#2a2a2a;">Any</div>
<div class="t" style="left:560.90px;top:282px;font-size:4.7px;line-height:4.7px;color:#2a2a2a;">Any</div>
<div class="t" style="left:605.00px;top:282px;font-size:4.7px;line-height:4.7px;color:#2a2a2a;">ICMPv6</div>
<svg class="a" style="left:222.2px;top:287.01px" width="5.8" height="5.8" viewBox="0 0 6 6"><circle cx="3" cy="3" r="2.8" fill="#3f9a3a"/><path d="M1.6,3.1 L2.7,4.1 L4.5,1.9" stroke="#fff" stroke-width="0.9" fill="none"/></svg>
<div class="t" style="left:229.40px;top:289px;font-size:4.7px;line-height:4.7px;color:#2a2a2a;">Core Networking - Destination Unreacha...</div>
<div class="t" style="left:323.00px;top:289px;font-size:4.7px;line-height:4.7px;color:#2a2a2a;">Core Networking</div>
<div class="t" style="left:391.00px;top:289px;font-size:4.7px;line-height:4.7px;color:#2a2a2a;">All</div>
<div class="t" style="left:414.70px;top:289px;font-size:4.7px;line-height:4.7px;color:#2a2a2a;">Yes</div>
<div class="t" style="left:441.30px;top:289px;font-size:4.7px;line-height:4.7px;color:#2a2a2a;">Allow</div>
<div class="t" style="left:465.00px;top:289px;font-size:4.7px;line-height:4.7px;color:#2a2a2a;">No</div>
<div class="t" style="left:493.00px;top:289px;font-size:4.7px;line-height:4.7px;color:#2a2a2a;">System</div>
<div class="t" style="left:521.60px;top:289px;font-size:4.7px;line-height:4.7px;color:#2a2a2a;">Any</div>
<div class="t" style="left:560.90px;top:289px;font-size:4.7px;line-height:4.7px;color:#2a2a2a;">Any</div>
<div class="t" style="left:605.00px;top:289px;font-size:4.7px;line-height:4.7px;color:#2a2a2a;">ICMPv6</div>
<svg class="a" style="left:222.2px;top:294.58px" width="5.8" height="5.8" viewBox="0 0 6 6"><circle cx="3" cy="3" r="2.8" fill="#3f9a3a"/><path d="M1.6,3.1 L2.7,4.1 L4.5,1.9" stroke="#fff" stroke-width="0.9" fill="none"/></svg>
<div class="t" style="left:229.40px;top:297px;font-size:4.7px;line-height:4.7px;color:#2a2a2a;">Core Networking - Dynamic Host Config...</div>
<div class="t" style="left:323.00px;top:297px;font-size:4.7px;line-height:4.7px;color:#2a2a2a;">Core Networking</div>
<div class="t" style="left:391.00px;top:297px;font-size:4.7px;line-height:4.7px;color:#2a2a2a;">All</div>
<div class="t" style="left:414.70px;top:297px;font-size:4.7px;line-height:4.7px;color:#2a2a2a;">Yes</div>
<div class="t" style="left:441.30px;top:297px;font-size:4.7px;line-height:4.7px;color:#2a2a2a;">Allow</div>
<div class="t" style="left:465.00px;top:297px;font-size:4.7px;line-height:4.7px;color:#2a2a2a;">No</div>
<div class="t" style="left:493.00px;top:297px;font-size:4.7px;line-height:4.7px;color:#2a2a2a;">%System...</div>
<div class="t" style="left:521.60px;top:297px;font-size:4.7px;line-height:4.7px;color:#2a2a2a;">Any</div>
<div class="t" style="left:560.90px;top:297px;font-size:4.7px;line-height:4.7px;color:#2a2a2a;">Any</div>
<div class="t" style="left:605.00px;top:297px;font-size:4.7px;line-height:4.7px;color:#2a2a2a;">UDP</div>
<svg class="a" style="left:222.2px;top:302.15px" width="5.8" height="5.8" viewBox="0 0 6 6"><circle cx="3" cy="3" r="2.8" fill="#3f9a3a"/><path d="M1.6,3.1 L2.7,4.1 L4.5,1.9" stroke="#fff" stroke-width="0.9" fill="none"/></svg>
<div class="t" style="left:229.40px;top:304px;font-size:4.7px;line-height:4.7px;color:#2a2a2a;">Core Networking - Dynamic Host Config...</div>
<div class="t" style="left:323.00px;top:304px;font-size:4.7px;line-height:4.7px;color:#2a2a2a;">Core Networking</div>
<div class="t" style="left:391.00px;top:304px;font-size:4.7px;line-height:4.7px;color:#2a2a2a;">All</div>
<div class="t" style="left:414.70px;top:304px;font-size:4.7px;line-height:4.7px;color:#2a2a2a;">Yes</div>
<div class="t" style="left:441.30px;top:304px;font-size:4.7px;line-height:4.7px;color:#2a2a2a;">Allow</div>
<div class="t" style="left:465.00px;top:304px;font-size:4.7px;line-height:4.7px;color:#2a2a2a;">No</div>
<div class="t" style="left:493.00px;top:304px;font-size:4.7px;line-height:4.7px;color:#2a2a2a;">%System...</div>
<div class="t" style="left:521.60px;top:304px;font-size:4.7px;line-height:4.7px;color:#2a2a2a;">Any</div>
<div class="t" style="left:560.90px;top:304px;font-size:4.7px;line-height:4.7px;color:#2a2a2a;">Any</div>
<div class="t" style="left:605.00px;top:304px;font-size:4.7px;line-height:4.7px;color:#2a2a2a;">UDP</div>
<svg class="a" style="left:222.2px;top:309.72px" width="5.8" height="5.8" viewBox="0 0 6 6"><circle cx="3" cy="3" r="2.8" fill="#3f9a3a"/><path d="M1.6,3.1 L2.7,4.1 L4.5,1.9" stroke="#fff" stroke-width="0.9" fill="none"/></svg>
<div class="t" style="left:229.40px;top:312px;font-size:4.7px;line-height:4.7px;color:#2a2a2a;">Core Networking - Internet Group Mana...</div>
<div class="t" style="left:323.00px;top:312px;font-size:4.7px;line-height:4.7px;color:#2a2a2a;">Core Networking</div>
<div class="t" style="left:391.00px;top:312px;font-size:4.7px;line-height:4.7px;color:#2a2a2a;">All</div>
<div class="t" style="left:414.70px;top:312px;font-size:4.7px;line-height:4.7px;color:#2a2a2a;">Yes</div>
<div class="t" style="left:441.30px;top:312px;font-size:4.7px;line-height:4.7px;color:#2a2a2a;">Allow</div>
<div class="t" style="left:465.00px;top:312px;font-size:4.7px;line-height:4.7px;color:#2a2a2a;">No</div>
<div class="t" style="left:493.00px;top:312px;font-size:4.7px;line-height:4.7px;color:#2a2a2a;">System</div>
<div class="t" style="left:521.60px;top:312px;font-size:4.7px;line-height:4.7px;color:#2a2a2a;">Any</div>
<div class="t" style="left:560.90px;top:312px;font-size:4.7px;line-height:4.7px;color:#2a2a2a;">Any</div>
<div class="t" style="left:605.00px;top:312px;font-size:4.7px;line-height:4.7px;color:#2a2a2a;">IGMP</div>
<svg class="a" style="left:222.2px;top:317.29px" width="5.8" height="5.8" viewBox="0 0 6 6"><circle cx="3" cy="3" r="2.8" fill="#3f9a3a"/><path d="M1.6,3.1 L2.7,4.1 L4.5,1.9" stroke="#fff" stroke-width="0.9" fill="none"/></svg>
<div class="t" style="left:229.40px;top:320px;font-size:4.7px;line-height:4.7px;color:#2a2a2a;">Core Networking - IPHTTPS (TCP-In)</div>
<div class="t" style="left:323.00px;top:320px;font-size:4.7px;line-height:4.7px;color:#2a2a2a;">Core Networking</div>
<div class="t" style="left:391.00px;top:320px;font-size:4.7px;line-height:4.7px;color:#2a2a2a;">All</div>
<div class="t" style="left:414.70px;top:320px;font-size:4.7px;line-height:4.7px;color:#2a2a2a;">Yes</div>
<div class="t" style="left:441.30px;top:320px;font-size:4.7px;line-height:4.7px;color:#2a2a2a;">Allow</div>
<div class="t" style="left:465.00px;top:320px;font-size:4.7px;line-height:4.7px;color:#2a2a2a;">No</div>
<div class="t" style="left:493.00px;top:320px;font-size:4.7px;line-height:4.7px;color:#2a2a2a;">System</div>
<div class="t" style="left:521.60px;top:320px;font-size:4.7px;line-height:4.7px;color:#2a2a2a;">Any</div>
<div class="t" style="left:560.90px;top:320px;font-size:4.7px;line-height:4.7px;color:#2a2a2a;">Any</div>
<div class="t" style="left:605.00px;top:320px;font-size:4.7px;line-height:4.7px;color:#2a2a2a;">TCP</div>
<svg class="a" style="left:222.2px;top:324.86px" width="5.8" height="5.8" viewBox="0 0 6 6"><circle cx="3" cy="3" r="2.8" fill="#3f9a3a"/><path d="M1.6,3.1 L2.7,4.1 L4.5,1.9" stroke="#fff" stroke-width="0.9" fill="none"/></svg>
<div class="t" style="left:229.40px;top:327px;font-size:4.7px;line-height:4.7px;color:#2a2a2a;">Core Networking - IPv6 (IPv6-In)</div>
<div class="t" style="left:323.00px;top:327px;font-size:4.7px;line-height:4.7px;color:#2a2a2a;">Core Networking</div>
<div class="t" style="left:391.00px;top:327px;font-size:4.7px;line-height:4.7px;color:#2a2a2a;">All</div>
<div class="t" style="left:414.70px;top:327px;font-size:4.7px;line-height:4.7px;color:#2a2a2a;">Yes</div>
<div class="t" style="left:441.30px;top:327px;font-size:4.7px;line-height:4.7px;color:#2a2a2a;">Allow</div>
<div class="t" style="left:465.00px;top:327px;font-size:4.7px;line-height:4.7px;color:#2a2a2a;">No</div>
<div class="t" style="left:493.00px;top:327px;font-size:4.7px;line-height:4.7px;color:#2a2a2a;">System</div>
<div class="t" style="left:521.60px;top:327px;font-size:4.7px;line-height:4.7px;color:#2a2a2a;">Any</div>
<div class="t" style="left:560.90px;top:327px;font-size:4.7px;line-height:4.7px;color:#2a2a2a;">Any</div>
<div class="t" style="left:605.00px;top:327px;font-size:4.7px;line-height:4.7px;color:#2a2a2a;">IPv6</div>
<svg class="a" style="left:222.2px;top:332.43px" width="5.8" height="5.8" viewBox="0 0 6 6"><circle cx="3" cy="3" r="2.8" fill="#3f9a3a"/><path d="M1.6,3.1 L2.7,4.1 L4.5,1.9" stroke="#fff" stroke-width="0.9" fill="none"/></svg>
<div class="t" style="left:229.40px;top:335px;font-size:4.7px;line-height:4.7px;color:#2a2a2a;">Core Networking - Multicast Listener Do...</div>
<div class="t" style="left:323.00px;top:335px;font-size:4.7px;line-height:4.7px;color:#2a2a2a;">Core Networking</div>
<div class="t" style="left:391.00px;top:335px;font-size:4.7px;line-height:4.7px;color:#2a2a2a;">All</div>
<div class="t" style="left:414.70px;top:335px;font-size:4.7px;line-height:4.7px;color:#2a2a2a;">Yes</div>
<div class="t" style="left:441.30px;top:335px;font-size:4.7px;line-height:4.7px;color:#2a2a2a;">Allow</div>
<div class="t" style="left:465.00px;top:335px;font-size:4.7px;line-height:4.7px;color:#2a2a2a;">No</div>
<div class="t" style="left:493.00px;top:335px;font-size:4.7px;line-height:4.7px;color:#2a2a2a;">System</div>
<div class="t" style="left:521.60px;top:335px;font-size:4.7px;line-height:4.7px;color:#2a2a2a;">Any</div>
<div class="t" style="left:560.90px;top:335px;font-size:4.7px;line-height:4.7px;color:#2a2a2a;">Local subnet</div>
<div class="t" style="left:605.00px;top:335px;font-size:4.7px;line-height:4.7px;color:#2a2a2a;">ICMPv6</div>
<svg class="a" style="left:222.2px;top:340.00px" width="5.8" height="5.8" viewBox="0 0 6 6"><circle cx="3" cy="3" r="2.8" fill="#3f9a3a"/><path d="M1.6,3.1 L2.7,4.1 L4.5,1.9" stroke="#fff" stroke-width="0.9" fill="none"/></svg>
<div class="t" style="left:229.40px;top:342px;font-size:4.7px;line-height:4.7px;color:#2a2a2a;">Core Networking - Multicast Listener Qu...</div>
<div class="t" style="left:323.00px;top:342px;font-size:4.7px;line-height:4.7px;color:#2a2a2a;">Core Networking</div>
<div class="t" style="left:391.00px;top:342px;font-size:4.7px;line-height:4.7px;color:#2a2a2a;">All</div>
<div class="t" style="left:414.70px;top:342px;font-size:4.7px;line-height:4.7px;color:#2a2a2a;">Yes</div>
<div class="t" style="left:441.30px;top:342px;font-size:4.7px;line-height:4.7px;color:#2a2a2a;">Allow</div>
<div class="t" style="left:465.00px;top:342px;font-size:4.7px;line-height:4.7px;color:#2a2a2a;">No</div>
<div class="t" style="left:493.00px;top:342px;font-size:4.7px;line-height:4.7px;color:#2a2a2a;">System</div>
<div class="t" style="left:521.60px;top:342px;font-size:4.7px;line-height:4.7px;color:#2a2a2a;">Any</div>
<div class="t" style="left:560.90px;top:342px;font-size:4.7px;line-height:4.7px;color:#2a2a2a;">Local subnet</div>
<div class="t" style="left:605.00px;top:342px;font-size:4.7px;line-height:4.7px;color:#2a2a2a;">ICMPv6</div>
<svg class="a" style="left:222.2px;top:347.57px" width="5.8" height="5.8" viewBox="0 0 6 6"><circle cx="3" cy="3" r="2.8" fill="#3f9a3a"/><path d="M1.6,3.1 L2.7,4.1 L4.5,1.9" stroke="#fff" stroke-width="0.9" fill="none"/></svg>
<div class="t" style="left:229.40px;top:350px;font-size:4.7px;line-height:4.7px;color:#2a2a2a;">Core Networking - Multicast Listener Rep...</div>
<div class="t" style="left:323.00px;top:350px;font-size:4.7px;line-height:4.7px;color:#2a2a2a;">Core Networking</div>
<div class="t" style="left:391.00px;top:350px;font-size:4.7px;line-height:4.7px;color:#2a2a2a;">All</div>
<div class="t" style="left:414.70px;top:350px;font-size:4.7px;line-height:4.7px;color:#2a2a2a;">Yes</div>
<div class="t" style="left:441.30px;top:350px;font-size:4.7px;line-height:4.7px;color:#2a2a2a;">Allow</div>
<div class="t" style="left:465.00px;top:350px;font-size:4.7px;line-height:4.7px;color:#2a2a2a;">No</div>
<div class="t" style="left:493.00px;top:350px;font-size:4.7px;line-height:4.7px;color:#2a2a2a;">System</div>
<div class="t" style="left:521.60px;top:350px;font-size:4.7px;line-height:4.7px;color:#2a2a2a;">Any</div>
<div class="t" style="left:560.90px;top:350px;font-size:4.7px;line-height:4.7px;color:#2a2a2a;">Local subnet</div>
<div class="t" style="left:605.00px;top:350px;font-size:4.7px;line-height:4.7px;color:#2a2a2a;">ICMPv6</div>
<div class="a" style="left:620.8px;top:100.7px;width:7.8px;height:254.6px;background:#f0f0f0;"></div>
<div class="a" style="left:621.8px;top:109px;width:5.2px;height:45.5px;background:#cdcdcd;"></div>
<div class="t" style="left:622.30px;top:103px;font-size:5px;line-height:5px;color:#606060;">^</div>
<div class="t" style="left:622.50px;top:350px;font-size:4px;line-height:4px;color:#606060;">v</div>
<div class="a" style="left:628.5px;top:91.8px;width:1.5px;height:270.5px;background:#c4c4c4;"></div>
<div class="a" style="left:629.6px;top:92.2px;width:115px;height:0.8px;background:#b0b0b0;"></div>
<div class="a" style="left:630.7px;top:93px;width:114px;height:7.6px;background:#f3f3f3;"></div>
<div class="t" style="left:632.60px;top:96px;font-size:4.8px;line-height:4.8px;color:#000;font-weight:bold;transform:scaleX(0.9260);">Actions</div>
<div class="a" style="left:630.7px;top:100.5px;width:114px;height:10.2px;background:linear-gradient(#c4d6ec,#a9c1de);"></div>
<div class="t" style="left:633.00px;top:106px;font-size:4.8px;line-height:4.8px;color:#2d4e78;font-weight:bold;transform:scaleX(0.9241);">Inbound Rules</div>
<div class="t" style="left:737.50px;top:105px;font-size:3.6px;line-height:3.6px;color:#000;">▲</div>
<div class="t" style="left:643.00px;top:115px;font-size:4.8px;line-height:4.8px;color:#000;transform:scaleX(0.9351);">New Rule...</div>
<div class="t" style="left:643.00px;top:125px;font-size:4.8px;line-height:4.8px;color:#000;transform:scaleX(0.9685);">Filter by Profile</div>
<div class="t" style="left:643.00px;top:135px;font-size:4.8px;line-height:4.8px;color:#000;">Filter by State</div>
<div class="t" style="left:643.00px;top:144px;font-size:4.8px;line-height:4.8px;color:#000;">Filter by Group</div>
<div class="t" style="left:643.00px;top:154px;font-size:4.8px;line-height:4.8px;color:#000;">View</div>
<div class="t" style="left:643.00px;top:164px;font-size:4.8px;line-height:4.8px;color:#000;">Refresh</div>
<div class="t" style="left:643.00px;top:174px;font-size:4.8px;line-height:4.8px;color:#000;">Export List...</div>
<div class="t" style="left:643.00px;top:184px;font-size:4.8px;line-height:4.8px;color:#000;">Help</div>
<div class="t" style="left:738.00px;top:125px;font-size:3.4px;line-height:3.4px;color:#000;">▶</div>
<div class="t" style="left:738.00px;top:135px;font-size:3.4px;line-height:3.4px;color:#000;">▶</div>
<div class="t" style="left:738.00px;top:145px;font-size:3.4px;line-height:3.4px;color:#000;">▶</div>
<div class="t" style="left:738.00px;top:155px;font-size:3.4px;line-height:3.4px;color:#000;">▶</div>
<div class="a" style="left:632.5px;top:113.5px;width:5.5px;height:5px;background:linear-gradient(135deg,#e0b030,#c84030 50%,#48a040 50%);border-radius:0.8px"></div>
<svg class="a" style="left:632px;top:122.80px" width="7" height="6" viewBox="0 0 7 6"><path d="M0.6,0.7 L6.4,0.7 L4,3.6 L4,5.5 L3,5.5 L3,3.6Z" fill="#e8f4f0" stroke="#2a6a66" stroke-width="0.9" stroke-linejoin="round"/></svg>
<svg class="a" style="left:632px;top:132.40px" width="7" height="6" viewBox="0 0 7 6"><path d="M0.6,0.7 L6.4,0.7 L4,3.6 L4,5.5 L3,5.5 L3,3.6Z" fill="#e8f4f0" stroke="#2a6a66" stroke-width="0.9" stroke-linejoin="round"/></svg>
<svg class="a" style="left:632px;top:142.30px" width="7" height="6" viewBox="0 0 7 6"><path d="M0.6,0.7 L6.4,0.7 L4,3.6 L4,5.5 L3,5.5 L3,3.6Z" fill="#e8f4f0" stroke="#2a6a66" stroke-width="0.9" stroke-linejoin="round"/></svg>
<div class="a" style="left:632.8px;top:162.2px;width:5px;height:5.5px;background:linear-gradient(#e0f0e0,#9cd09c);border:0.5px solid #9cb89c"></div>
<div class="a" style="left:632.8px;top:172px;width:5px;height:5.8px;background:linear-gradient(#f6f6f6,#dcdcdc);border:0.5px solid #bbb"></div>
<div class="a" style="left:635.5px;top:174px;width:3.5px;height:3px;background:#4caf50;border-radius:50%"></div>
<div class="a" style="left:632.8px;top:181.8px;width:5px;height:6px;background:linear-gradient(#5a7ad0,#3550a8);"></div>
<div class="t" style="left:634.20px;top:183px;font-size:4px;line-height:4px;color:#fff;font-weight:bold;">?</div>
<svg class="a" style="left:655px;top:116px" width="9" height="10" viewBox="0 0 9 10"><path d="M2.5,0.5 L3.8,0.5 L3.8,4 L7.5,4.5 L7.5,8 L6,9.5 L3,9.5 L1,6.5 L1.5,5.8 L2.5,6.5Z" fill="#fff" stroke="#222" stroke-width="0.6"/></svg>
<div class="a" style="left:142px;top:362.2px;width:602.8px;height:9.6px;background:#f0f0f0;border-top:0.7px solid #d8d8d8"></div>
<div class="t" style="left:142.70px;top:366px;font-size:4.8px;line-height:4.8px;color:#1c1c1c;transform:scaleX(0.9311);">New Rule...</div>
<div class="a" style="left:142px;top:370.9px;width:602.8px;height:0.9px;background:#fafafa;"></div>
<div class="a" style="left:44.2px;top:41.2px;width:285.40px;height:232.8px;background:#fff;border:1px solid rgba(0,0,0,.16);box-shadow:1px 1px 3px rgba(0,0,0,.22)"></div>
<svg class="a" style="left:47.6px;top:44.6px" width="7" height="7" viewBox="0 0 7 7">
<path d="M0.3,3.2 L2.8,2 L4.6,3 L4.6,6.3 L0.3,6.3Z" fill="#a33c28"/><path d="M0.3,4.6 L4.6,4.6" stroke="#6a2418" stroke-width="0.4"/><circle cx="4.6" cy="2.1" r="1.8" fill="#3c9c94"/><circle cx="4.2" cy="1.7" r="0.7" fill="#7cc8c0"/></svg>
<div class="t" style="left:56.50px;top:46px;font-size:5.0px;line-height:5.0px;color:#1c1c1c;transform:scaleX(0.9331);">New Inbound Rule Wizard</div>
<svg class="a" style="left:321px;top:45.5px" width="5" height="5" viewBox="0 0 5 5"><path d="M0.3,0.3 L4.7,4.7 M4.7,0.3 L0.3,4.7" stroke="#333" stroke-width="0.7"/></svg>
<div class="t" style="left:48.20px;top:57px;font-size:6.2px;line-height:6.2px;color:#000;font-weight:bold;transform:scaleX(0.9256);">Rule Type</div>
<div class="t" style="left:47.50px;top:68px;font-size:5.0px;line-height:5.0px;color:#1c1c1c;transform:scaleX(0.8327);">Select the type of firewall rule to create.</div>
<div class="a" style="left:110.9px;top:78px;width:218.2px;height:195.5px;background:#f0f0f0;"></div>
<div class="t" style="left:47.00px;top:82px;font-size:5.0px;line-height:5.0px;color:#000;font-weight:bold;transform:scaleX(0.8507);">Steps:</div>
<div class="a" style="left:46px;top:90.4px;width:63px;height:7.4px;background:#f3f3f3;"></div>
<svg class="a" style="left:46.8px;top:92.50px" width="3.5" height="3.5" viewBox="0 0 4 4"><path d="M0.4,2.2 L1.5,3.3 L3.6,0.7" stroke="#4caf3c" stroke-width="1.1" fill="none"/></svg>
<div class="t" style="left:53.40px;top:92px;font-size:5.0px;line-height:5.0px;color:#333;transform:scaleX(0.8831);">Rule Type</div>
<svg class="a" style="left:46.8px;top:101.90px" width="3.5" height="3.5" viewBox="0 0 4 4"><path d="M0.4,2.2 L1.5,3.3 L3.6,0.7" stroke="#4caf3c" stroke-width="1.1" fill="none"/></svg>
<div class="t" style="left:53.40px;top:101px;font-size:5.0px;line-height:5.0px;color:#3a86d0;transform:scaleX(0.8137);">Program</div>
<div class="a" style="left:47.6px;top:111.6px;width:2.0px;height:2.0px;background:#6050b0;border-radius:50%"></div>
<div class="t" style="left:53.40px;top:110px;font-size:5.0px;line-height:5.0px;color:#333;transform:scaleX(0.8707);">Action</div>
<div class="a" style="left:47.6px;top:120.8px;width:2.0px;height:2.0px;background:#6050b0;border-radius:50%"></div>
<div class="t" style="left:53.40px;top:120px;font-size:5.0px;line-height:5.0px;color:#333;transform:scaleX(0.8044);">Profile</div>
<div class="a" style="left:47.6px;top:130.1px;width:2.0px;height:2.0px;background:#6050b0;border-radius:50%"></div>
<div class="t" style="left:53.40px;top:129px;font-size:5.0px;line-height:5.0px;color:#333;transform:scaleX(0.8322);">Name</div>
<div class="t" style="left:126.40px;top:90px;font-size:5.0px;line-height:5.0px;color:#1c1c1c;transform:scaleX(0.8576);">What type of rule would you like to create?</div>
<div class="a" style="left:125.00px;top:109.60px;width:5.2px;height:5.2px;border-radius:50%;border:0.6px solid #6a6a6a;background:#fff"></div>
<div class="a" style="left:126.40px;top:111.00px;width:2.4px;height:2.4px;border-radius:50%;background:#222"></div>
<div class="t" style="left:133.00px;top:110px;font-size:5.0px;line-height:5.0px;color:#000;font-weight:bold;transform:scaleX(0.8754);">Program</div>
<div class="t" style="left:133.00px;top:117px;font-size:5.0px;line-height:5.0px;color:#1c1c1c;transform:scaleX(0.8319);">Rule that controls connections for a program.</div>
<div class="a" style="left:125.00px;top:127.90px;width:5.2px;height:5.2px;border-radius:50%;border:0.6px solid #6a6a6a;background:#fff"></div>
<div class="t" style="left:133.00px;top:129px;font-size:5.0px;line-height:5.0px;color:#000;font-weight:bold;transform:scaleX(0.8700);">Port</div>
<div class="t" style="left:132.60px;top:136px;font-size:5.0px;line-height:5.0px;color:#1c1c1c;transform:scaleX(0.8545);">Rule that controls connections for a TCP or UDP port.</div>
<div class="a" style="left:125.00px;top:146.30px;width:5.2px;height:5.2px;border-radius:50%;border:0.6px solid #6a6a6a;background:#fff"></div>
<div class="t" style="left:132.60px;top:147px;font-size:5.0px;line-height:5.0px;color:#000;font-weight:bold;transform:scaleX(0.8980);">Predefined:</div>
<div class="a" style="left:132.6px;top:153.6px;width:174.6px;height:8.2px;background:#cccccc;"></div>
<div class="t" style="left:134.70px;top:156px;font-size:5.0px;line-height:5.0px;color:#9a9a9a;transform:scaleX(0.8273);">AllJoyn Router</div>
<div class="t" style="left:132.60px;top:164px;font-size:5.0px;line-height:5.0px;color:#1c1c1c;transform:scaleX(0.8516);">Rule that controls connections for a Windows experience.</div>
<div class="a" style="left:125.00px;top:174.20px;width:5.2px;height:5.2px;border-radius:50%;border:0.6px solid #6a6a6a;background:#fff"></div>
<div class="t" style="left:132.60px;top:175px;font-size:5.0px;line-height:5.0px;color:#000;font-weight:bold;transform:scaleX(0.8866);">Custom</div>
<div class="t" style="left:132.60px;top:182px;font-size:5.0px;line-height:5.0px;color:#1c1c1c;transform:scaleX(0.8185);">Custom rule.</div>
<div class="a" style="left:220.2px;top:257.1px;width:33.6px;height:7.7px;background:#cccccc;"></div>
<div class="t" style="left:230.30px;top:259px;font-size:5.0px;line-height:5.0px;color:#a0a0a0;transform:scaleX(0.7844);">&lt; Back</div>
<div class="a" style="left:255.4px;top:257.1px;width:29.2px;height:7.7px;background:#e1e1e1;border:0.8px solid #2a80d0"></div>
<div class="t" style="left:264.00px;top:259px;font-size:5.0px;line-height:5.0px;color:#1c1c1c;transform:scaleX(0.8225);">Next &gt;</div>
<div class="a" style="left:287.7px;top:257.1px;width:33px;height:7.7px;background:#e1e1e1;border:0.6px solid #adadad"></div>
<div class="t" style="left:297.80px;top:259px;font-size:5.0px;line-height:5.0px;color:#1c1c1c;transform:scaleX(0.8417);">Cancel</div>
<div class="a" style="left:0px;top:415.8px;width:1024px;height:16.2px;background:#03101f;"></div>
<svg class="a" style="left:6.2px;top:420.6px" width="7" height="7" viewBox="0 0 7 7"><g fill="#fff"><rect x="0" y="0.3" width="3.2" height="3"/><rect x="3.6" y="0" width="3.4" height="3.3"/><rect x="0" y="3.7" width="3.2" height="3"/><rect x="3.6" y="3.7" width="3.4" height="3.3"/></g></svg>
<div class="a" style="left:19.3px;top:415.8px;width:137.4px;height:16.2px;background:#f0f0f0;"></div>
<svg class="a" style="left:24.5px;top:420px" width="7" height="8" viewBox="0 0 7 8"><circle cx="4.3" cy="3" r="2.1" fill="none" stroke="#333" stroke-width="0.8"/><line x1="3" y1="4.6" x2="0.8" y2="7" stroke="#333" stroke-width="0.9"/></svg>
<div class="t" style="left:35.80px;top:422px;font-size:6.8px;line-height:6.8px;color:#5a5a5a;transform:scaleX(0.8486);">Type here to search</div>
<svg class="a" style="left:162.5px;top:420px" width="8" height="8" viewBox="0 0 8 8"><rect x="1.5" y="1.5" width="5" height="5" fill="none" stroke="#ddd" stroke-width="0.7"/><line x1="0.3" y1="0.5" x2="0.3" y2="7.5" stroke="#ddd" stroke-width="0.6"/><line x1="7.7" y1="0.5" x2="7.7" y2="7.5" stroke="#ddd" stroke-width="0.6"/></svg>
<svg class="a" style="left:182.2px;top:419.2px" width="9" height="9" viewBox="0 0 22 22">
<circle cx="11" cy="11" r="9.5" fill="url(#edg)"/>
<path d="M3,8 Q6,1.5 12,1.5 Q20,2 20.5,10 Q20,14 16,14 Q12,14 13,11 Q13,8 9,8 Q5,8 3,11Z" fill="url(#edg2)"/>
<circle cx="12.5" cy="11.5" r="3.2" fill="#0b8ee0"/></svg>
<div class="a" style="left:202.3px;top:420.2px;width:8px;height:6.8px;background:linear-gradient(#f7d760 0 35%,#e9b93a 35%);border-radius:0.5px"></div>
<div class="a" style="left:203.5px;top:424.3px;width:5.5px;height:1.5px;background:#5b9bd5;"></div>
<div class="a" style="left:221.7px;top:420.3px;width:8px;height:6.5px;background:linear-gradient(#b9dcf2,#74b8e8);border-radius:0.5px"></div>
<div class="a" style="left:218px;top:430.8px;width:16.5px;height:1.2px;background:#8a9bb0;"></div>
<div class="a" style="left:236.4px;top:415.8px;width:18.3px;height:16.2px;background:#3a3e48;"></div>
<svg class="a" style="left:241px;top:419px" width="9" height="9" viewBox="0 0 7 7">
<path d="M0.5,3 L4,1.8 L6.5,3 L6.5,6.5 L0.5,6.5Z" fill="#a4402c"/><circle cx="5" cy="2" r="1.6" fill="#6aa8d8"/></svg>
<div class="a" style="left:236.4px;top:430.8px;width:18.3px;height:1.2px;background:#9aaabf;"></div>
<svg class="a" style="left:935.5px;top:421.5px" width="6" height="4" viewBox="0 0 6 4"><path d="M0.5,3.5 L3,1 L5.5,3.5" stroke="#ddd" stroke-width="0.7" fill="none"/></svg>
<svg class="a" style="left:945px;top:420.5px" width="8" height="7" viewBox="0 0 8 7"><rect x="1.5" y="0.5" width="6" height="4.3" fill="none" stroke="#ddd" stroke-width="0.7"/><rect x="0.3" y="2" width="3" height="3" fill="#03101f" stroke="#ddd" stroke-width="0.6"/></svg>
<svg class="a" style="left:954px;top:420px" width="9" height="8" viewBox="0 0 9 8"><path d="M0.5,2.5 L2,2.5 L4,0.8 L4,6.2 L2,4.5 L0.5,4.5Z" fill="#ddd"/><circle cx="6" cy="5.5" r="2" fill="#e05060"/></svg>
<div class="t" style="left:965.00px;top:423px;font-size:4.8px;line-height:4.8px;color:#e8e8e8;transform:scaleX(0.8941);">ENG</div>
<div class="t" style="left:981.60px;top:419px;font-size:4.8px;line-height:4.8px;color:#e8e8e8;transform:scaleX(0.9286);">2:52 PM</div>
<div class="t" style="left:980.20px;top:426px;font-size:4.8px;line-height:4.8px;color:#e8e8e8;transform:scaleX(0.9366);">10/9/2024</div>
<svg class="a" style="left:1006.5px;top:420px" width="8" height="8" viewBox="0 0 8 8"><path d="M0.5,0.5 L7.5,0.5 L7.5,5.5 L4.5,5.5 L3.5,7 L2.5,5.5 L0.5,5.5Z" fill="none" stroke="#ddd" stroke-width="0.7"/></svg>
<div class="a" style="left:1021.5px;top:416px;width:0.8px;height:16px;background:#444a55;"></div>
</div></body></html>
